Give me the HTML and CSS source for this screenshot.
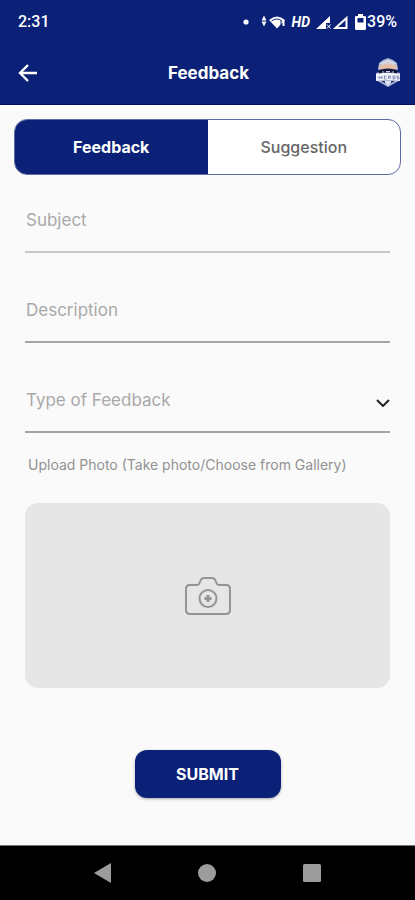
FILE: index.html
```html
<!DOCTYPE html>
<html lang="en">
<head>
<meta charset="utf-8">
<meta name="viewport" content="width=device-width, initial-scale=1">
<title>Feedback</title>
<link rel="stylesheet" href="styles.css">
</head>
<body>
<header class="header">
  <div class="status">
    <span class="time">2:31</span>
    <div class="indicators">
      <svg class="dot" width="6" height="6" viewBox="0 0 6 6" aria-hidden="true"><circle cx="3" cy="3" r="2.6"/></svg>
      <svg width="25" height="16" viewBox="0 0 25 16" aria-hidden="true">
        <path d="M3 1.500l2.400 5H.6zM3 12.500l-2.400-5h4.800z"/>
        <path d="M8 6Q16 -1 24 6L16 14.500z"/>
        <path class="cut" d="M10.500 7Q16 3 21 7M20 7v7"/>
        <path class="thin" d="M22.500 6v6"/>
      </svg>
      <span class="hd">HD</span>
      <svg width="33" height="16" viewBox="0 0 33 16" aria-hidden="true">
        <path d="M0 15L14 2v7h-4v6z"/>
        <path class="mark" d="M11 10.500l3.500 4M14.500 10.500l-3.500 4"/>
        <path class="outline" d="M19.500 14L30.500 4v10z"/>
      </svg>
      <svg width="11" height="16" viewBox="0 0 11 16" aria-hidden="true">
        <path fill-rule="evenodd" d="M3 0h5v2h1.500q1.500 0 1.500 1v12q0 1-1.500 1h-8Q0 16 0 15V3q0-1 1.500-1H3zM2.500 4v4.500h6V4z"/>
      </svg>
      <span class="percent">39%</span>
    </div>
  </div>
  <div class="appbar">
    <button class="back" type="button" aria-label="Back">
      <svg width="20" height="20" viewBox="0 0 20 20" aria-hidden="true"><path d="M19 10H2M10 2l-8 8 8 8"/></svg>
    </button>
    <h1 class="title">Feedback</h1>
    <svg class="badge" width="26" height="30" viewBox="0 0 26 30" aria-hidden="true">
      <path fill="#aab4d4" d="M4 5l4-3 5-2 5 2 4 3 1 6-2 3 4 1v7l-5 3-7 4-7-4-5-3v-7l4-1-2-3z"/>
      <ellipse cx="13" cy="9" rx="9" ry="4" fill="#e6bda6"/>
      <path fill="#d5d8e6" d="M5 6q8-8 16 0l-3 1-2-2-1 2-2-3-2 3-1-2-2 2z"/>
      <path fill="#10163a" d="M4 12q9-3 18 0v4q-9-2-18 0z"/>
      <path stroke="#c5cbe0" stroke-width="1" d="M7 14h2M11 13.500h4M17 14h2"/>
      <path fill="#f0f1fa" d="M1 16q12-3 24 0v7q-12-2-24 0z"/>
      <path fill="none" stroke="#8490b8" stroke-width="1" d="M4 18v3M4 19.500h3M7 18v3M11.500 18h-2v3h2M13.500 21v-3h2v2h-2M18 18v3h2v-3zM24 18h-2v1.500h2V21h-2"/>
      <path fill="#24366f" d="M6 23h14l-7 4z"/>
      <path fill="#dce0ef" d="M10 23h6v2l-3 3-3-3z"/>
    </svg>
  </div>
</header>

<main class="content">
  <div class="tabs" role="tablist">
    <button class="tab tab-active" type="button" role="tab" aria-selected="true">Feedback</button>
    <button class="tab" type="button" role="tab" aria-selected="false">Suggestion</button>
  </div>

  <form class="form">
    <input class="field field-light" type="text" aria-label="Subject" placeholder="Subject">
    <input class="field" type="text" aria-label="Description" placeholder="Description">
    <div class="select-wrap">
      <select class="field" aria-label="Type of Feedback">
        <option>Type of Feedback</option>
      </select>
      <svg class="chevron" width="14" height="8" viewBox="0 0 14 8" aria-hidden="true"><path d="M1 1l6 6 6-6"/></svg>
    </div>
    <label class="upload-label" for="photo">Upload Photo (Take photo/Choose from Gallery)</label>
    <label class="upload" for="photo">
      <input class="file" id="photo" type="file" accept="image/*">
      <svg width="46" height="38" viewBox="0 0 46 38" aria-hidden="true">
        <path d="M5 8h7q2 0 3-3 1-4 4-4h8q3 0 4 4 1 3 3 3h7q4 0 4 4v21q0 4-4 4H5q-4 0-4-4V12q0-4 4-4z"/>
        <circle cx="23" cy="21.500" r="8.500"/>
        <path class="plus" d="M23 18v7M19.500 21.500h7"/>
      </svg>
    </label>
    <button class="submit" type="submit">SUBMIT</button>
  </form>
</main>

<nav class="navbar" aria-label="System">
  <button class="nav" type="button" aria-label="Back"><svg width="20" height="20" viewBox="0 0 20 20"><path d="M1 10L18 0v20z"/></svg></button>
  <button class="nav" type="button" aria-label="Home"><svg width="20" height="20" viewBox="0 0 20 20"><circle cx="10" cy="10" r="9"/></svg></button>
  <button class="nav" type="button" aria-label="Recent apps"><svg width="20" height="20" viewBox="0 0 20 20"><rect x="1" y="1" width="18" height="18" rx="1.500"/></svg></button>
</nav>
</body>
</html>
```
FILE: styles.css
```css
* { box-sizing: border-box; }

body {
  margin: 0;
  min-height: 100vh;
  display: flex;
  flex-direction: column;
  background: #fafafa;
  font-family: Inter, "Open Sans", sans-serif;
}

button {
  margin: 0;
  padding: 0;
  border: 0;
  background: none;
  font: inherit;
  color: inherit;
  cursor: pointer;
}

svg { display: block; flex: none; }

.header {
  background: #0b2178;
  border-bottom: 1px solid #070b66;
  color: #fff;
}

.status {
  height: 42px;
  padding: 2px 18px 0;
  display: flex;
  align-items: center;
  justify-content: space-between;
  font: 500 16px/20px Roboto, sans-serif;
}

.indicators { display: flex; align-items: center; gap: 6px; fill: #fff; }
.dot { margin-right: 6px; }
.hd { font-size: 14px; font-style: italic; font-weight: 700; }
.cut { fill: none; stroke: #0b2178; stroke-width: 1; }
.thin { fill: none; stroke: #fff; stroke-width: 2; }
.mark { fill: none; stroke: #fff; stroke-width: 1; }
.outline { fill: none; stroke: #fff; stroke-width: 2; }
.percent { margin-left: -5px; }

.appbar {
  height: 62px;
  padding: 0 14px 0 18px;
  display: grid;
  grid-template-columns: 26px 1fr 28px;
  align-items: center;
}

.back { height: 40px; display: flex; align-items: center; }
.back svg { fill: none; stroke: #fff; stroke-width: 2.4; }
.title { margin: 0; text-align: center; font-size: 17px; line-height: 24px; font-weight: 700; }
.badge { justify-self: end; }

.content { flex: 1; padding: 14px 14px 46px; }

.tabs {
  height: 56px;
  display: grid;
  grid-template-columns: 1fr 1fr;
  border: 1px solid #5e68a3;
  border-radius: 13px;
  overflow: hidden;
  background: #fff;
}

.tab { font-size: 16px; font-weight: 500; color: #666; }
.tab-active { background: #0b2178; color: #fff; font-weight: 700; }

.form { padding: 12px 11px 0; display: flex; flex-direction: column; }

.field {
  width: 100%;
  height: 66px;
  margin: 0 0 24px;
  padding: 2px 0 0 1px;
  border: 0;
  border-bottom: 2px solid #a4a4a4;
  border-radius: 0;
  outline: 0;
  background: none;
  appearance: none;
  font: 400 17px/20px Inter, sans-serif;
  color: #a9a9a9;
}

.field-light { border-color: #c8c8c8; }
.field::placeholder { color: #a9a9a9; opacity: 1; }
.select-wrap { position: relative; }
.chevron {
  position: absolute;
  right: 0;
  top: 32px;
  fill: none;
  stroke: #222;
  stroke-width: 2;
  pointer-events: none;
}

.upload-label { padding: 0 3px; font-size: 14px; line-height: 16px; color: #929292; }

.upload {
  position: relative;
  height: 185px;
  margin-top: 30px;
  display: flex;
  align-items: center;
  justify-content: center;
  border-radius: 13px;
  background: #e6e6e6;
  cursor: pointer;
}

.upload svg { fill: none; stroke: #949494; stroke-width: 2; }
.upload .plus { stroke-width: 3; }
.file { position: absolute; width: 1px; height: 1px; opacity: 0; }

.submit {
  align-self: center;
  width: 146px;
  height: 48px;
  margin-top: 62px;
  border-radius: 12px;
  background: #0b2178;
  box-shadow: 0 1px 3px #0005;
  color: #fff;
  font-size: 16px;
  font-weight: 700;
}

.navbar {
  height: 55px;
  padding: 0 51px;
  display: grid;
  grid-template-columns: repeat(3, 1fr);
  background: #000;
  border-top: 1px solid #777;
}

.nav { display: flex; align-items: center; justify-content: center; }
.nav svg { fill: #9c9c9c; }
```
